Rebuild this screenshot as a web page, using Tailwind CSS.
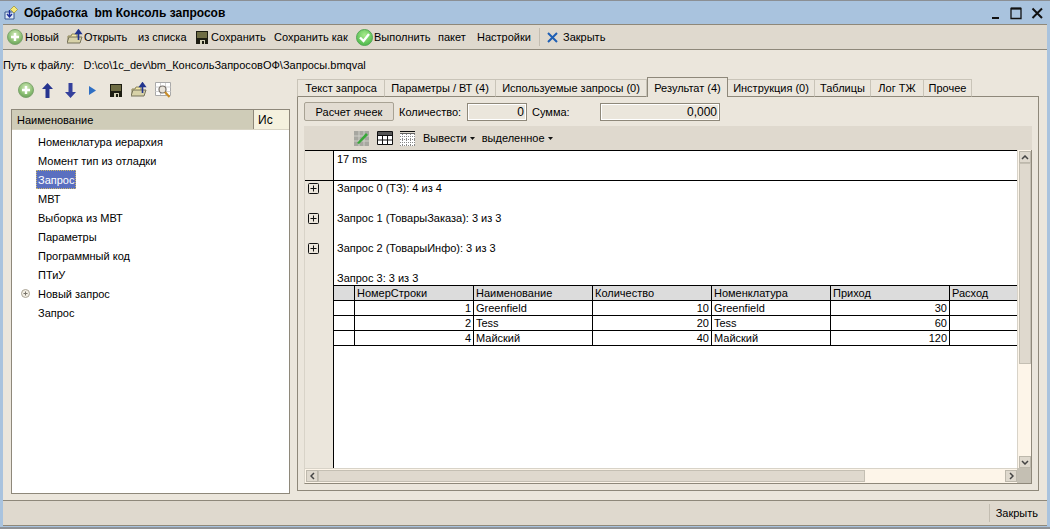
<!DOCTYPE html>
<html lang="ru">
<head>
    <meta charset="UTF-8">
    <title>Обработка bm Консоль запросов</title>
    <script src="https://cdn.jsdelivr.net/npm/@tailwindcss/browser@4"></script>
</head>
<body class="w-[1050px] h-[529px] overflow-hidden bg-[#a9c3de] font-['Liberation_Sans',Arial,sans-serif] text-[11px] leading-[14px] text-black">
<svg width="0" height="0" class="absolute">
    <defs>
        <radialGradient id="greenBall" cx="50%" cy="35%" r="70%"><stop offset="0" stop-color="#d6ecc0"/><stop offset="0.6" stop-color="#8fc176"/><stop offset="1" stop-color="#5f9a52"/></radialGradient>
        <radialGradient id="greenCheck" cx="50%" cy="35%" r="70%"><stop offset="0" stop-color="#a8ea8c"/><stop offset="1" stop-color="#45b545"/></radialGradient>
        <symbol id="plus" viewBox="0 0 16 16"><circle cx="8" cy="8" r="7.5" fill="url(#greenBall)" stroke="#7fa56f"/><path d="M8 4v8M4 8h8" stroke="#fff" stroke-width="2.4"/></symbol>
        <symbol id="folder" viewBox="0 0 16 16"><path d="M1 7h3l1-2h5v8H1z" fill="#f5e9a8" stroke="#8a8458"/><path d="M0 14l2-6h10l3 0-2 6z" fill="#d8d2a8" stroke="#77735a"/><path d="M11.5 11V3M9 4.5 11.500 1 14 4.500z" fill="#22358e" stroke="#22358e" stroke-width="1.600"/></symbol>
        <symbol id="floppy" viewBox="0 0 12 13"><path d="M0 0h12v13H0z" fill="#1d1d12"/><path d="M1 1h10v6H1z" fill="#6f6d44"/><path d="M4 9h5v4H4z" fill="#d5d3b8"/><path d="M6 10h2v3H6z" fill="#1d1d12"/></symbol>
        <symbol id="expand" viewBox="0 0 11 11"><rect x="0.500" y="0.500" width="10" height="10" rx="1" fill="#ebe6dc" stroke="#111"/><path d="M2.500 5.500h6M5.500 2.500v6" stroke="#111"/></symbol>
    </defs>
</svg>

<div class="h-[529px] border-t border-[#8b8f94] border-b-2 border-b-[#8f9296] px-[3px] pb-[1px] flex flex-col">
    <!-- title -->
    <div class="h-[23px] flex items-center relative shrink-0">
        <svg class="w-[14px] h-[14px] ml-[1px]" viewBox="0 0 14 14"><path d="M1 6h9v7H1z" fill="#dfeaf6" stroke="#35548f"/><path d="M5.500 4v6M3 8l2.500 3L8 8" fill="none" stroke="#1d2f9a" stroke-width="1.400"/><path d="M10 0l3.500 3.500L10 7 6.500 3.500z" fill="#f6ea7a" stroke="#9a8d2e" stroke-width="0.700"/></svg>
        <span class="ml-[6px] font-bold text-[12px] whitespace-pre">Обработка  bm Консоль запросов</span>
        <div class="ml-auto flex items-center mr-[1px]">
            <svg class="w-[54px] h-[14px]" viewBox="0 0 54 14"><path d="M0 12h7" stroke="#111" stroke-width="2"/><path d="M19 2.500h10v10H19z" fill="none" stroke="#111" stroke-width="1.300"/><path d="M19 2.500h10" stroke="#111" stroke-width="2"/><path d="M40.500 2.500 50 12M50 2.500 40.500 12" stroke="#111" stroke-width="2"/></svg>
        </div>
    </div>

    <!-- command bar -->
    <div class="h-[26px] shrink-0 bg-[#dfd9ce] border-y border-[#8e887a] flex items-center">
        <svg class="w-[16px] h-[16px] ml-[4px]"><use href="#plus"/></svg>
        <span class="ml-[2px] w-[42px]">Новый</span>
        <svg class="w-[16px] h-[16px]"><use href="#folder"/></svg>
        <span class="ml-[1px] w-[54px]">Открыть</span>
        <span class="w-[58px]">из списка</span>
        <svg class="w-[12px] h-[13px] mt-[1px]"><use href="#floppy"/></svg>
        <span class="ml-[3px] w-[63px]">Сохранить</span>
        <span class="w-[82px]">Сохранить как</span>
        <svg class="w-[17px] h-[17px]" viewBox="0 0 17 17"><circle cx="8.500" cy="8.500" r="8" fill="url(#greenCheck)" stroke="#58a758"/><path d="M4 8.500l3.500 3.500L13 5" fill="none" stroke="#fff" stroke-width="2.400"/></svg>
        <span class="ml-[1px] w-[64px]">Выполнить</span>
        <span class="w-[39px]">пакет</span>
        <span class="w-[62px]">Настройки</span>
        <div class="w-px h-[18px] bg-[#c3bdb1]"></div>
        <svg class="w-[11px] h-[11px] ml-[7px]" viewBox="0 0 11 11"><path d="M1 1l9 9M10 1l-9 9" stroke="#1f5fb4" stroke-width="2"/></svg>
        <span class="ml-[5px]">Закрыть</span>
    </div>

    <!-- content -->
    <div class="flex-1 min-h-0 bg-[#ebe6dc] border-r-0 flex flex-col">
        <div class="h-[28px] shrink-0 flex items-center whitespace-pre pt-[2px]"><span>Путь к файлу:  </span><span class="ml-[3px]">D:\co\1c_dev\bm_КонсольЗапросовОФ\Запросы.bmqval</span></div>

        <div class="flex-1 min-h-0 flex">
            <!-- left -->
            <div class="w-[294px] shrink-0 flex flex-col pl-[8px]">
                <div class="h-[31px] flex items-center pl-[7px] pb-[7px]">
                    <svg class="w-[16px] h-[16px]"><use href="#plus"/></svg>
                    <svg class="w-[11px] h-[15px] ml-[8px]" viewBox="0 0 11 15"><path d="M5.500 0 11 6H7.500v9h-4V6H0z" fill="#26348f"/></svg>
                    <svg class="w-[11px] h-[15px] ml-[12px]" viewBox="0 0 11 15"><path d="M5.500 15 11 9H7.500V0h-4v9H0z" fill="#34409c"/></svg>
                    <svg class="w-[7px] h-[9px] ml-[13px]" viewBox="0 0 7 9"><path d="M0 0l7 4.500L0 9z" fill="#2f6fc4"/></svg>
                    <svg class="w-[12px] h-[13px] ml-[14px] mt-[1px]"><use href="#floppy"/></svg>
                    <svg class="w-[16px] h-[16px] ml-[9px]"><use href="#folder"/></svg>
                    <svg class="w-[16px] h-[16px] ml-[8px]" viewBox="0 0 16 16"><path d="M.5.500h15v13H.500z" fill="#fff" stroke="#a9a9a9"/><path d="M.5 5h15M.5 9.500h15M5.500 1v12M10.500 1v12" stroke="#d2d2d2"/><circle cx="7.500" cy="7.500" r="3.500" fill="#e9e4da" stroke="#76706a" stroke-width="1.200"/><path d="M10 10l4.500 5" stroke="#c98c25" stroke-width="2"/></svg>
                </div>
                <div class="w-[279px] h-[385px] border border-[#8e887a] bg-white">
                    <div class="h-[20px] flex bg-[#cfccb8] border-b border-[#d8d4c4]">
                        <div class="w-[242px] pl-[5px] flex items-center border-r border-[#8e887a]">Наименование</div>
                        <div class="flex-1 pl-[4px] flex items-center bg-[#f4f1de] text-[12px]">Ис</div>
                    </div>
                    <ul class="pt-[2px] pl-[24px]">
                        <li class="h-[19px] flex items-center pl-[2px]">Номенклатура иерархия</li>
                        <li class="h-[19px] flex items-center pl-[2px]">Момент тип из отладки</li>
                        <li class="h-[19px] flex items-center"><span class="h-[19px] px-[2px] flex items-center bg-[#5a6fc0] text-white outline-1 -outline-offset-1 outline-dotted outline-[#c9b56a]">Запрос</span></li>
                        <li class="h-[19px] flex items-center pl-[2px]">МВТ</li>
                        <li class="h-[19px] flex items-center pl-[2px]">Выборка из МВТ</li>
                        <li class="h-[19px] flex items-center pl-[2px]">Параметры</li>
                        <li class="h-[19px] flex items-center pl-[2px]">Программный код</li>
                        <li class="h-[19px] flex items-center pl-[2px]">ПТиУ</li>
                        <li class="h-[19px] flex items-center pl-[2px] relative">
                            <svg class="absolute left-[-15px] top-[5px] w-[9px] h-[9px]" viewBox="0 0 9 9"><circle cx="4.500" cy="4.500" r="4" fill="#f2eee4" stroke="#a8a294"/><path d="M2.500 4.500h4M4.500 2.500v4" stroke="#77736a"/></svg>
                            Новый запрос
                        </li>
                        <li class="h-[19px] flex items-center pl-[2px]">Запрос</li>
                    </ul>
                </div>
            </div>

            <!-- right -->
            <div class="w-[742px] shrink-0 flex flex-col">
                <div class="h-[20px] shrink-0 flex items-end -mt-[1px] relative z-10 whitespace-nowrap">
                    <div class="w-[88px] h-[18px] bg-[#ebe6dc] border border-[#c9c4b8] border-b-[#8e887a] flex items-center justify-center">Текст запроса</div>
                    <div class="w-[111px] h-[18px] bg-[#ebe6dc] border border-l-0 border-[#c9c4b8] border-b-[#8e887a] flex items-center justify-center">Параметры / ВТ (4)</div>
                    <div class="w-[151px] h-[18px] bg-[#ebe6dc] border border-l-0 border-[#c9c4b8] border-b-[#8e887a] flex items-center justify-center">Используемые запросы (0)</div>
                    <div class="w-[81px] h-[20px] bg-[#ebe6dc] border border-b-0 border-[#8e887a] flex items-center justify-center">Результат (4)</div>
                    <div class="w-[87px] h-[18px] bg-[#ebe6dc] border border-l-0 border-[#c9c4b8] border-b-[#8e887a] flex items-center justify-center">Инструкция (0)</div>
                    <div class="w-[56px] h-[18px] bg-[#ebe6dc] border border-l-0 border-[#c9c4b8] border-b-[#8e887a] flex items-center justify-center">Таблицы</div>
                    <div class="w-[53px] h-[18px] bg-[#ebe6dc] border border-l-0 border-[#c9c4b8] border-b-[#8e887a] flex items-center justify-center">Лог ТЖ</div>
                    <div class="w-[48px] h-[18px] bg-[#ebe6dc] border border-l-0 border-[#c9c4b8] border-b-[#8e887a] flex items-center justify-center">Прочее</div>
                    <div class="flex-1 border-b border-[#8e887a]"></div>
                </div>
                <div class="h-[395px] -mt-[1px] border border-t-0 border-[#8e887a] pl-[6px] pr-[6px] pt-[6px]">
                    <!-- totals -->
                    <div class="h-[19px] flex items-center">
                        <button class="w-[90px] h-[19px] rounded-[2px] border border-[#a8a294] bg-[#e2dcd2]">Расчет ячеек</button>
                        <span class="ml-[5px] w-[68px]">Количество:</span>
                        <div class="w-[60px] h-[18px] border border-[#8e887a] bg-[#ebe6dc] shadow-[inset_0_0_0_1px_#fff] flex items-center justify-end pr-[2px] text-[12px]">0</div>
                        <span class="ml-[5px] w-[68px]">Сумма:</span>
                        <div class="w-[120px] h-[18px] border border-[#8e887a] bg-[#ebe6dc] shadow-[inset_0_0_0_1px_#fff] flex items-center justify-end pr-[2px] text-[12px]">0,000</div>
                    </div>
                    <!-- grid toolbar -->
                    <div class="h-[24px] mt-[5px] bg-[#dfd9ce] flex items-center pl-[50px]">
                        <svg class="w-[15px] h-[15px]" viewBox="0 0 15 15"><path d="M0 0h15v15H0z" fill="#a7a7a0"/><path d="M5 0v15M10 0v15M0 5h15M0 10h15" stroke="#cfcfc8"/><path d="M3 12l9-10 2 2-9 9z" fill="#38a838"/></svg>
                        <svg class="w-[16px] h-[14px] ml-[8px]" viewBox="0 0 16 14"><path d="M.5.500h15v13H.500z" fill="#fff" stroke="#111"/><path d="M.5 4.500h15M.5 9h15M5.500 1v12M10.500 1v12" stroke="#111"/><path d="M1 1h14v3H1z" fill="#555"/></svg>
                        <svg class="w-[15px] h-[15px] ml-[7px]" viewBox="0 0 15 15"><path d="M0 .5h15" stroke="#111"/><path d="M0 2h15v13H0z" fill="#fff"/><path d="M0 2.500h15" stroke="#666"/><path d="M0 5.500h15M0 8.500h15M0 11.500h15M0 14.500h15M2.500 3v12M6.500 3v12M10.500 3v12M14.500 3v12" stroke="#888" stroke-dasharray="1 1"/></svg>
                        <span class="ml-[8px]">Вывести</span>
                        <svg class="w-[5px] h-[3px] ml-[3px]" viewBox="0 0 5 3"><path d="M0 0h5L2.500 3z" fill="#111"/></svg>
                        <span class="ml-[7px]">выделенное</span>
                        <svg class="w-[5px] h-[3px] ml-[3px]" viewBox="0 0 5 3"><path d="M0 0h5L2.500 3z" fill="#111"/></svg>
                    </div>
                    <!-- sheet -->
                    <div class="h-[334px] flex flex-col border-l border-[#d8d3c8] border-r border-r-[#8e887a] border-b border-b-[#8e887a]">
                        <div class="flex-1 min-h-0 flex">
                            <div class="flex-1 min-w-0 border-t border-black flex overflow-hidden">
                                <div class="w-[29px] shrink-0 bg-[#ebe6dc] border-r border-black pt-[29px]">
                                    <div class="h-[30px] pt-[3px] pl-[3px]"><svg class="w-[11px] h-[11px]"><use href="#expand"/></svg></div>
                                    <div class="h-[30px] pt-[3px] pl-[3px]"><svg class="w-[11px] h-[11px]"><use href="#expand"/></svg></div>
                                    <div class="h-[30px] pt-[3px] pl-[3px]"><svg class="w-[11px] h-[11px]"><use href="#expand"/></svg></div>
                                </div>
                                <div class="flex-1 min-w-0 bg-white">
                                    <div class="h-[30px] pl-[3px] pt-[1px] flex -ml-[29px] pl-[32px] border-b border-black relative">17 ms</div>
                                    <div class="h-[30px] pl-[3px] pt-[0px]">Запрос 0 (ТЗ): 4 из 4</div>
                                    <div class="h-[30px] pl-[3px]">Запрос 1 (ТоварыЗаказа): 3 из 3</div>
                                    <div class="h-[30px] pl-[3px]">Запрос 2 (ТоварыИнфо): 3 из 3</div>
                                    <div class="h-[14px] pl-[3px]">Запрос 3: 3 из 3</div>
                                    <div class="grid grid-cols-[21px_119px_119px_119px_119px_119px_67px] border-t border-black w-[683px]">
                                        <div class="h-[15px] bg-[#dcdcdc] border-b border-r border-black"></div>
                                        <div class="h-[15px] bg-[#dcdcdc] border-b border-r border-black pl-[2px]">НомерСтроки</div>
                                        <div class="h-[15px] bg-[#dcdcdc] border-b border-r border-black pl-[2px]">Наименование</div>
                                        <div class="h-[15px] bg-[#dcdcdc] border-b border-r border-black pl-[2px]">Количество</div>
                                        <div class="h-[15px] bg-[#dcdcdc] border-b border-r border-black pl-[2px]">Номенклатура</div>
                                        <div class="h-[15px] bg-[#dcdcdc] border-b border-r border-black pl-[2px]">Приход</div>
                                        <div class="h-[15px] bg-[#dcdcdc] border-b border-black pl-[2px]">Расход</div>

                                        <div class="h-[15px] border-b border-r border-black"></div>
                                        <div class="h-[15px] border-b border-r border-black pr-[2px] text-right">1</div>
                                        <div class="h-[15px] border-b border-r border-black pl-[2px]">Greenfield</div>
                                        <div class="h-[15px] border-b border-r border-black pr-[2px] text-right">10</div>
                                        <div class="h-[15px] border-b border-r border-black pl-[2px]">Greenfield</div>
                                        <div class="h-[15px] border-b border-r border-black pr-[2px] text-right">30</div>
                                        <div class="h-[15px] border-b border-black"></div>

                                        <div class="h-[15px] border-b border-r border-black"></div>
                                        <div class="h-[15px] border-b border-r border-black pr-[2px] text-right">2</div>
                                        <div class="h-[15px] border-b border-r border-black pl-[2px]">Tess</div>
                                        <div class="h-[15px] border-b border-r border-black pr-[2px] text-right">20</div>
                                        <div class="h-[15px] border-b border-r border-black pl-[2px]">Tess</div>
                                        <div class="h-[15px] border-b border-r border-black pr-[2px] text-right">60</div>
                                        <div class="h-[15px] border-b border-black"></div>

                                        <div class="h-[15px] border-b border-r border-black"></div>
                                        <div class="h-[15px] border-b border-r border-black pr-[2px] text-right">4</div>
                                        <div class="h-[15px] border-b border-r border-black pl-[2px]">Майский</div>
                                        <div class="h-[15px] border-b border-r border-black pr-[2px] text-right">40</div>
                                        <div class="h-[15px] border-b border-r border-black pl-[2px]">Майский</div>
                                        <div class="h-[15px] border-b border-r border-black pr-[2px] text-right">120</div>
                                        <div class="h-[15px] border-b border-black"></div>
                                    </div>
                                </div>
                            </div>
                            <!-- vertical scrollbar -->
                            <div class="w-[14px] shrink-0 bg-[#fdf5e9] border-l border-[#d8d3c8] flex flex-col items-center pt-[1px]">
                                <div class="w-[12px] h-[12px] bg-[#dfd9ce] border border-[#bdb8ac] flex items-center justify-center"><svg class="w-[8px] h-[5px]" viewBox="0 0 8 5"><path d="M1 4l3-3 3 3" fill="none" stroke="#444" stroke-width="1.500"/></svg></div>
                                <div class="w-[12px] h-[201px] bg-[#dfd9ce] border border-[#c4bfb3]"></div>
                                <div class="w-[12px] h-[12px] mt-auto bg-[#dfd9ce] border border-[#bdb8ac] flex items-center justify-center"><svg class="w-[8px] h-[5px]" viewBox="0 0 8 5"><path d="M1 1l3 3 3-3" fill="none" stroke="#444" stroke-width="1.500"/></svg></div>
                            </div>
                        </div>
                        <!-- horizontal scrollbar -->
                        <div class="h-[15px] shrink-0 flex">
                            <div class="flex-1 bg-[#fdf5e9] border-t border-[#d8d3c8] flex items-center pl-[1px]">
                                <div class="w-[12px] h-[12px] bg-[#dfd9ce] border border-[#bdb8ac] flex items-center justify-center"><svg class="w-[5px] h-[8px]" viewBox="0 0 5 8"><path d="M4 1 1 4l3 3" fill="none" stroke="#444" stroke-width="1.500"/></svg></div>
                                <div class="w-[547px] h-[12px] bg-[#dfd9ce] border border-[#c4bfb3]"></div>
                                <div class="w-[12px] h-[12px] ml-auto bg-[#dfd9ce] border border-[#bdb8ac] flex items-center justify-center"><svg class="w-[5px] h-[8px]" viewBox="0 0 5 8"><path d="M1 1l3 3-3 3" fill="none" stroke="#444" stroke-width="1.500"/></svg></div>
                            </div>
                            <div class="w-[14px] bg-[#c4bfb3]"></div>
                        </div>
                    </div>
                </div>
            </div>
        </div>
    </div>

    <!-- status bar -->
    <div class="h-[26px] shrink-0 bg-[#dfd9ce] border-y border-[#8e887a] flex items-center justify-end">
        <div class="w-px h-[18px] bg-[#c3bdb1]"></div>
        <span class="ml-[6px] mr-[9px]">Закрыть</span>
    </div>
</div>
</body>
</html>
